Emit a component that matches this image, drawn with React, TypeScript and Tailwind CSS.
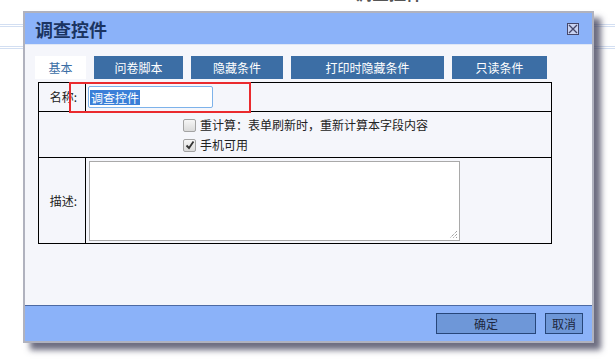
const font = { fontFamily: '"Noto Sans CJK SC", "Noto Sans", sans-serif' };

function Check({ checked = false }: { checked?: boolean }) {
  return (
    <span className="relative inline-flex h-[13px] w-[13px] shrink-0 items-center justify-center rounded-[2px] border border-[#a3a3a3] bg-gradient-to-b from-[#f6f6f6] to-[#dadada]">
      {checked ? (
        <svg width="10" height="10" viewBox="0 0 10 10">
          <path d="M1.5 5.5 L4 8 L8.5 1.5" fill="none" stroke="#333" strokeWidth="1.8" />
        </svg>
      ) : null}
    </span>
  );
}

const tabs = [
  { label: "问卷脚本", w: "w-[89px]" },
  { label: "隐藏条件", w: "w-[92px]" },
  { label: "打印时隐藏条件", w: "w-[153px]" },
  { label: "只读条件", w: "w-[95px]" },
];

export default function App() {
  return (
    <div className="relative h-[361px] w-[615px] overflow-hidden bg-white" style={font}>
      {/* page behind the dialog */}
      <div className="-mt-[18px] pl-[355px] text-[17px] font-bold leading-[22px] text-[#555]">调查控件</div>
      <div className="mt-[20px] h-[3px] border-y border-[#d3dff2]" />
      <div className="mt-[19px] h-[3px] border-y border-[#d3dff2]" />

      {/* dialog */}
      <div className="absolute left-[23px] top-[11px] flex h-[332px] w-[571px] flex-col border-2 border-[#b0b2be] shadow-[7px_7px_6px_rgba(60,60,85,0.75)]">
        <div className="flex h-[32px] shrink-0 items-center justify-between border-b border-[#dfe7f6] bg-[#8bb2f9] pl-[10px] pr-[13px]">
          <span className="text-[18px] font-bold leading-none text-[#1b3461]">调查控件</span>
          <span className="flex h-[12px] w-[12px] items-center justify-center border border-[#45476a] bg-[#c9d3f2]">
            <svg width="10" height="10" viewBox="0 0 10 10">
              <path d="M1 1 L9 9 M9 1 L1 9" stroke="#45476a" strokeWidth="1.3" />
            </svg>
          </span>
        </div>

        <div className="flex-1 bg-[#f5f6fb] pt-[11px]">
          <div className="flex gap-[8px] pl-[10px]">
            <div className="flex h-[23px] w-[51px] items-center justify-center bg-white text-[12px] text-[#3b6ea5]">基本</div>
            {tabs.map((t) => (
              <div
                key={t.label}
                className={`flex h-[23px] ${t.w} items-center justify-center bg-[#3c6ea5] text-[12px] text-white`}
              >
                {t.label}
              </div>
            ))}
          </div>

          <div className="ml-[13px] mt-[3px] w-[514px] border border-black text-[12px] text-[#222]">
            <div className="flex h-[29px] border-b border-black">
              <div className="flex w-[47px] items-center justify-end border-r border-black pr-[8px]">名称:</div>
              <div className="flex items-center pl-[2px]">
                <div className="flex h-[22px] w-[125px] items-center rounded-[2px] border border-[#7db2ea] bg-white pl-[1px]">
                  <span className="bg-[#3a7fd8] px-[1px] leading-[15px] text-white">调查控件</span>
                </div>
              </div>
            </div>
            <div className="flex h-[46px] flex-col border-b border-black pl-[144px] pt-[3px]">
              <div className="flex h-[20px] items-center gap-[4px]">
                <Check />
                <span>重计算：表单刷新时，重新计算本字段内容</span>
              </div>
              <div className="flex h-[20px] items-center gap-[4px]">
                <Check checked />
                <span>手机可用</span>
              </div>
            </div>
            <div className="flex h-[85px]">
              <div className="flex w-[47px] items-center justify-end border-r border-black pr-[8px]">描述:</div>
              <div className="pl-[3px] pt-[3px]">
                <div className="relative h-[80px] w-[371px] border border-[#a9a9a9] bg-white">
                  <svg className="absolute bottom-[1px] right-[1px]" width="9" height="9" viewBox="0 0 9 9">
                    <path d="M8 1 L1 8 M8 4 L4 8 M8 7 L7 8" stroke="#777" strokeWidth="1" strokeDasharray="1 1" />
                  </svg>
                </div>
              </div>
            </div>
          </div>
        </div>

        <div className="flex h-[36px] shrink-0 items-start justify-end gap-[9px] border-t border-[#4d6aa3] bg-[#8bb2f9] pr-[9px] pt-[7px]">
          <div className="flex h-[21px] w-[100px] items-center justify-center border border-[#27467a] bg-[#6e97d8] text-[12px] text-[#1d2740]">确定</div>
          <div className="flex h-[21px] w-[38px] items-center justify-center border border-[#27467a] bg-[#6e97d8] text-[12px] text-[#1d2740]">取消</div>
        </div>
      </div>

      {/* annotation box */}
      <div className="absolute left-[69px] top-[82px] h-[31px] w-[182px] border-2 border-[#ea2a2e]" />
    </div>
  );
}
